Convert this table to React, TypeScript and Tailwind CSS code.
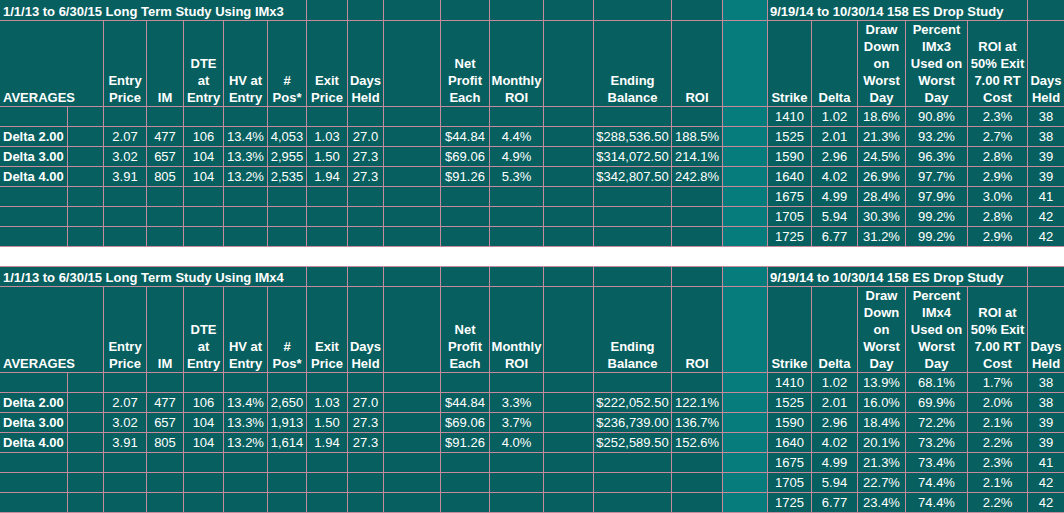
import React from "react";

const DARK = "bg-[#085f60]";
const LIGHT = "bg-[#077c7d]";

type LeftRow = { label: string; vals: string[] };

const cols =
  "grid grid-cols-[67px_35px_42px_36px_39px_43px_38px_40px_35px_56px_48px_53px_49px_77px_50px_44px_43px_45px_47px_61px_59px_36px] gap-px bg-[#c58b9c]";

function HeadCell({ lines, left }: { lines: string[]; left?: boolean }) {
  return (
    <div
      className={`${DARK} flex flex-col justify-end font-bold leading-[17px] whitespace-nowrap ${
        left ? "items-start pl-[3px]" : "items-center"
      }`}
    >
      {lines.map((l, i) => (
        <span key={i}>{l}</span>
      ))}
    </div>
  );
}

function Cell({ v, bold, left }: { v?: string; bold?: boolean; left?: boolean }) {
  return (
    <div
      className={`${DARK} leading-[19px] whitespace-nowrap ${bold ? "font-bold" : ""} ${
        left ? "text-left pl-[3px]" : "text-center"
      }`}
    >
      {v ?? ""}
    </div>
  );
}

function Table({
  title,
  imx,
  left,
  right,
  second,
}: {
  title: string;
  imx: string;
  left: LeftRow[];
  right: string[][];
  second?: boolean;
}) {
  const leftHeaders: string[][] = [
    ["Entry", "Price"],
    ["IM"],
    ["DTE", "at", "Entry"],
    ["HV at", "Entry"],
    ["#", "Pos*"],
    ["Exit", "Price"],
    ["Days", "Held"],
    [],
    ["Net", "Profit", "Each"],
    ["Monthly", "ROI"],
    [],
    ["Ending", "Balance"],
    ["ROI"],
  ];
  const rightHeaders: string[][] = [
    ["Strike"],
    ["Delta"],
    ["Draw", "Down", "on", "Worst", "Day"],
    ["Percent", imx, "Used on", "Worst", "Day"],
    ["ROI at", "50% Exit", "7.00 RT", "Cost"],
    ["Days", "Held"],
  ];
  const rows: (LeftRow | null)[] = [null, left[0], left[1], left[2], null, null, null];
  return (
    <div
      className={`${cols} ${
        second
          ? "grid-rows-[19px_85px_repeat(7,19px)] pt-px pb-px"
          : "grid-rows-[20px_85px_repeat(7,19px)] pb-px"
      }`}
    >
      {/* title row */}
      <div className={`${DARK} col-span-7 flex items-end pl-[3px] font-bold leading-[17px] whitespace-nowrap`}>
        {title}
      </div>
      {Array.from({ length: 8 }).map((_, i) => (
        <div key={`t${i}`} className={DARK} />
      ))}
      <div className={LIGHT} />
      <div className={`${DARK} col-span-5 flex items-end pl-[2px] font-bold leading-[17px] whitespace-nowrap`}>
        9/19/14 to 10/30/14 158 ES Drop Study
      </div>
      <div className={DARK} />

      {/* header row */}
      <div className={`${DARK} col-span-2 flex flex-col justify-end items-start pl-[3px] font-bold leading-[17px]`}>
        <span>AVERAGES</span>
      </div>
      {leftHeaders.map((h, i) => (
        <HeadCell key={`lh${i}`} lines={h} />
      ))}
      <div className={LIGHT} />
      {rightHeaders.map((h, i) => (
        <HeadCell key={`rh${i}`} lines={h} />
      ))}

      {/* data rows */}
      {rows.map((r, ri) => (
        <React.Fragment key={`r${ri}`}>
          <Cell v={r?.label} bold left />
          <Cell />
          {Array.from({ length: 13 }).map((_, ci) => (
            <Cell key={`c${ci}`} v={r ? r.vals[ci] : ""} />
          ))}
          <div className={LIGHT} />
          {right[ri].map((v, ci) => (
            <Cell key={`rc${ci}`} v={v} />
          ))}
        </React.Fragment>
      ))}
    </div>
  );
}

const left1: LeftRow[] = [
  { label: "Delta 2.00", vals: ["2.07", "477", "106", "13.4%", "4,053", "1.03", "27.0", "", "$44.84", "4.4%", "", "$288,536.50", "188.5%"] },
  { label: "Delta 3.00", vals: ["3.02", "657", "104", "13.3%", "2,955", "1.50", "27.3", "", "$69.06", "4.9%", "", "$314,072.50", "214.1%"] },
  { label: "Delta 4.00", vals: ["3.91", "805", "104", "13.2%", "2,535", "1.94", "27.3", "", "$91.26", "5.3%", "", "$342,807.50", "242.8%"] },
];

const right1: string[][] = [
  ["1410", "1.02", "18.6%", "90.8%", "2.3%", "38"],
  ["1525", "2.01", "21.3%", "93.2%", "2.7%", "38"],
  ["1590", "2.96", "24.5%", "96.3%", "2.8%", "39"],
  ["1640", "4.02", "26.9%", "97.7%", "2.9%", "39"],
  ["1675", "4.99", "28.4%", "97.9%", "3.0%", "41"],
  ["1705", "5.94", "30.3%", "99.2%", "2.8%", "42"],
  ["1725", "6.77", "31.2%", "99.2%", "2.9%", "42"],
];

const left2: LeftRow[] = [
  { label: "Delta 2.00", vals: ["2.07", "477", "106", "13.4%", "2,650", "1.03", "27.0", "", "$44.84", "3.3%", "", "$222,052.50", "122.1%"] },
  { label: "Delta 3.00", vals: ["3.02", "657", "104", "13.3%", "1,913", "1.50", "27.3", "", "$69.06", "3.7%", "", "$236,739.00", "136.7%"] },
  { label: "Delta 4.00", vals: ["3.91", "805", "104", "13.2%", "1,614", "1.94", "27.3", "", "$91.26", "4.0%", "", "$252,589.50", "152.6%"] },
];

const right2: string[][] = [
  ["1410", "1.02", "13.9%", "68.1%", "1.7%", "38"],
  ["1525", "2.01", "16.0%", "69.9%", "2.0%", "38"],
  ["1590", "2.96", "18.4%", "72.2%", "2.1%", "39"],
  ["1640", "4.02", "20.1%", "73.2%", "2.2%", "39"],
  ["1675", "4.99", "21.3%", "73.4%", "2.3%", "41"],
  ["1705", "5.94", "22.7%", "74.4%", "2.1%", "42"],
  ["1725", "6.77", "23.4%", "74.4%", "2.2%", "42"],
];

export default function App() {
  return (
    <div className="w-[1064px] h-[513px] overflow-hidden bg-white text-white text-[13px] font-['Liberation_Sans',Arial,sans-serif]">
      <Table title="1/1/13 to 6/30/15 Long Term Study Using IMx3" imx="IMx3" left={left1} right={right1} />
      <div className="h-[19px]" />
      <Table title="1/1/13 to 6/30/15 Long Term Study Using IMx4" imx="IMx4" left={left2} right={right2} second />
    </div>
  );
}
